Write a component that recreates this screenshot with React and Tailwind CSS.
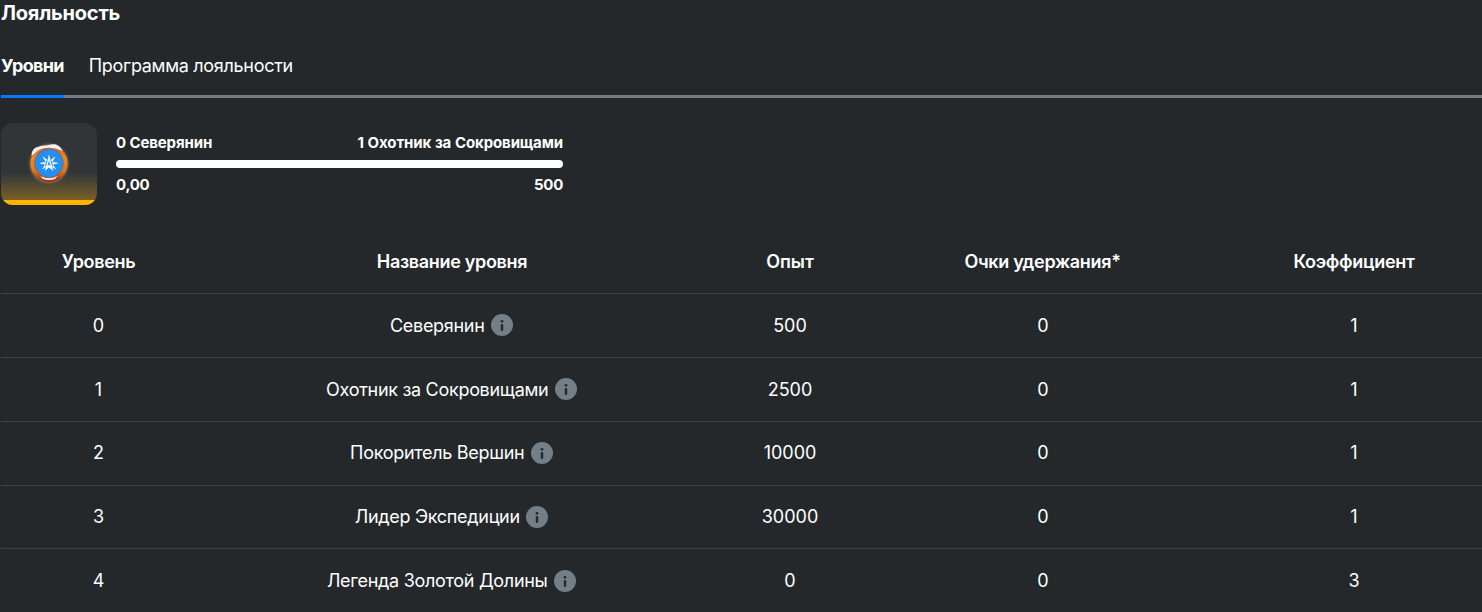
const levels = [
  { level: "0", name: "Северянин", exp: "500", points: "0", rate: "1" },
  { level: "1", name: "Охотник за Сокровищами", exp: "2500", points: "0", rate: "1" },
  { level: "2", name: "Покоритель Вершин", exp: "10000", points: "0", rate: "1" },
  { level: "3", name: "Лидер Экспедиции", exp: "30000", points: "0", rate: "1" },
  { level: "4", name: "Легенда Золотой Долины", exp: "0", points: "0", rate: "3" },
]

function InfoIcon() {
  return (
    <svg className="mb-px w-[22px] h-[22px] shrink-0" viewBox="0 0 22 22">
      <circle cx="11" cy="11" r="11" fill="#727f86" />
      <circle cx="11" cy="7.3" r="1.4" fill="#24282b" />
      <rect x="9.8" y="10" width="2.4" height="7" rx="1.1" fill="#24282b" />
    </svg>
  )
}

function LevelBadge() {
  return (
    <svg className="w-12 h-12" viewBox="0 0 48 48">
      <defs>
        <linearGradient id="ring" x1="0" y1="0" x2="0" y2="1">
          <stop offset="0" stopColor="#c85a2a" />
          <stop offset="0.35" stopColor="#f58a17" />
          <stop offset="0.7" stopColor="#e8780c" />
          <stop offset="1" stopColor="#a8240c" />
        </linearGradient>
        <filter id="glow" x="-30%" y="-30%" width="160%" height="160%">
          <feGaussianBlur stdDeviation="1.4" />
        </filter>
      </defs>
      <circle cx="24" cy="25.5" r="19" fill="#b9b4ae" opacity="0.6" filter="url(#glow)" />
      <circle cx="24" cy="25.3" r="18.6" fill="url(#ring)" />
      {/* Snow cap */}
      <path d="M6.5 18 Q6.5 11.5 11 9.5 Q17 7 22 7.5 Q28 5.5 31 6.5 Q36 8.5 37.5 13 Q31 9.8 24 9.8 Q15 10 10.5 14.5 Z" fill="#f3f2fb" />
      <path d="M15.5 38 Q24 42 32.5 38 L30 41 Q24 43 18 41 Z" fill="#f5e9e6" />
      <circle cx="24" cy="25.3" r="14.4" fill="#248ff0" stroke="#85604f" strokeWidth="0.8" />
      {/* Star */}
      <path d="M24 16.2 L28.2 33 L24 29.4 L19.8 33 Z M24 22.5 L22.5 28 L24 26.8 L25.5 28 Z" fill="#effaff" fillRule="evenodd" />
      <path
        d="M18.2 19 L22 22 L20.6 23.5 Z M29.8 19 L26 22 L27.4 23.5 Z M15.2 25.2 L20.6 24.2 L20.2 26.3 Z M32.8 25.2 L27.4 24.2 L27.8 26.3 Z M17.6 30.8 L20 27.2 L20.4 29.2 Z M30.4 30.8 L28 27.2 L27.6 29.2 Z"
        fill="#effaff"
        stroke="#effaff"
        strokeWidth="0.6"
        strokeLinejoin="round"
      />
    </svg>
  )
}

export default function App() {
  return (
    <div className="h-[612px] overflow-hidden bg-[#24282b] pl-px text-white font-['Inter',sans-serif]">
      <h1 className="h-[26px] text-[20px] leading-[26px] font-bold tracking-[-0.22px]">Лояльность</h1>

      {/* Tabs */}
      <nav className="mt-4 flex h-14 border-b-3 border-[#727f86] text-lg leading-[47px]">
        <a className="mr-[25px] h-14 border-b-3 border-[#0778ff] font-bold tracking-[-0.7px]">Уровни</a>
        <a className="tracking-[-0.3px]">Программа лояльности</a>
      </nav>

      {/* Current progress */}
      <section className="mt-[25px] flex h-[82px]">
        <div className="flex h-[82px] w-24 flex-col items-center overflow-hidden rounded-xl bg-linear-to-b from-[#313538] from-60% to-[#8a660c]">
          <div className="flex h-[77px] items-center">
            <LevelBadge />
          </div>
          <div className="h-[5px] w-full bg-[#ffb400]" />
        </div>
        <div className="ml-[19px] w-[447px] pt-[9px] text-[15px] leading-[22px] font-bold tracking-[-0.12px]">
          <div className="flex justify-between">
            <span>0 Северянин</span>
            <span className="[word-spacing:0.4px]">1 Охотник за Сокровищами</span>
          </div>
          <div className="mt-[6px] h-2 rounded-full bg-white" />
          <div className="mt-[6px] flex justify-between">
            <span className="tracking-[-0.3px]">0,00</span>
            <span className="tracking-[-0.3px]">500</span>
          </div>
        </div>
      </section>

      {/* Levels table */}
      <section className="mt-[25px] w-[1494px] text-lg">
        <div className="grid h-[64px] grid-cols-[195px_512px_164px_341px_282px] items-center border-b border-[#3c4144] text-center font-semibold tracking-[-0.32px]">
          <span>Уровень</span>
          <span>Название уровня</span>
          <span className="tracking-normal">Опыт</span>
          <span>Очки удержания*</span>
          <span>Коэффициент</span>
        </div>
        {levels.map((item) => (
          <div
            key={item.level}
            className="grid h-[63.85px] grid-cols-[195px_512px_164px_341px_282px] items-center border-b border-[#3c4144] pt-[0.5px] text-center"
          >
            <span>{item.level}</span>
            <span className="flex items-center justify-center gap-[6.5px] pr-px tracking-[-0.3px]">
              {item.name}
              <InfoIcon />
            </span>
            <span>{item.exp}</span>
            <span className="pl-px">{item.points}</span>
            <span>{item.rate}</span>
          </div>
        ))}
      </section>
    </div>
  )
}
